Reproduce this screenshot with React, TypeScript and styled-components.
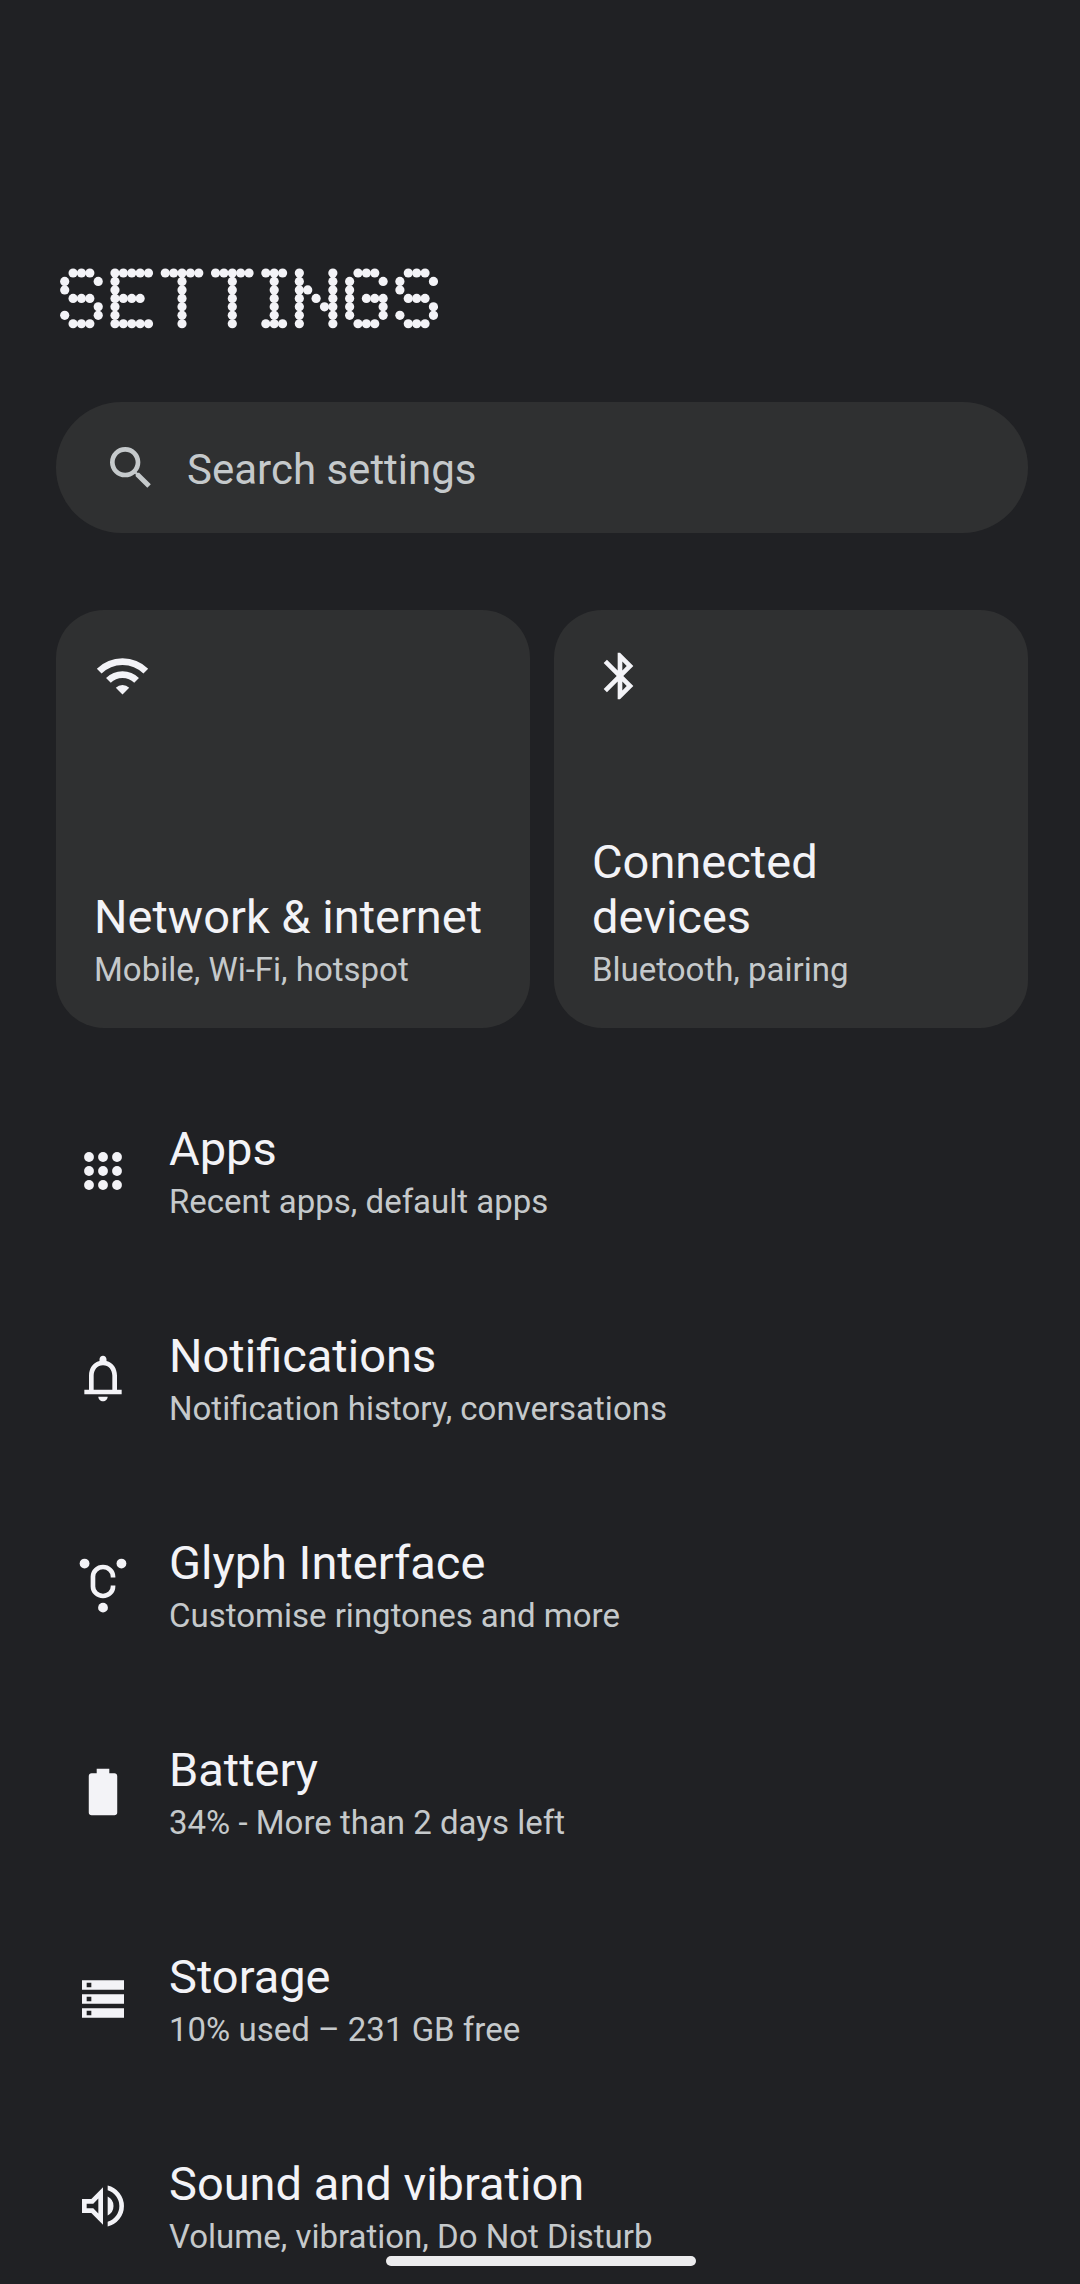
import React from "react";
import styled, { createGlobalStyle } from "styled-components";

const color = {
  page: "#202124",
  surface: "#2f3031",
  text: "#f3f3f7",
  muted: "#c5c9cb",
};

const GlobalStyle = createGlobalStyle`
  *, *::before, *::after { box-sizing: border-box; }
  html { scrollbar-width: none; }
  body {
    margin: 0;
    background: ${color.page};
    color: ${color.text};
    font-family: Roboto, "Noto Sans", sans-serif;
  }
`;

const Screen = styled.main`
  display: flex;
  flex-direction: column;
  padding: 264px 52px 10px 56px;
`;

const Heading = styled.h1`
  margin: 0 0 70px;
  line-height: 0;
`;

const SearchBar = styled.label`
  display: flex;
  align-items: center;
  gap: 28px;
  height: 131px;
  padding: 0 47px;
  border-radius: 66px;
  background: ${color.surface};
  color: ${color.muted};
`;

const SearchInput = styled.input`
  flex: 1;
  min-width: 0;
  padding: 4px 0 0;
  border: 0;
  outline: 0;
  background: none;
  color: ${color.text};
  font: inherit;
  font-size: 42px;
  line-height: 48px;
  &::placeholder { color: ${color.muted}; opacity: 1; }
`;

const Cards = styled.nav`
  display: grid;
  grid-template-columns: 1fr 1fr;
  gap: 24px;
  margin: 77px 0 39px;
`;

const Card = styled.a`
  display: flex;
  flex-direction: column;
  justify-content: space-between;
  min-height: 418px;
  padding: 38px 42px 39px 38px;
  border-radius: 48px;
  background: ${color.surface};
  color: inherit;
  text-decoration: none;
`;

const List = styled.ul`
  margin: 0;
  padding: 0;
  list-style: none;
`;

const Row = styled.a`
  display: flex;
  align-items: center;
  gap: 38px;
  min-height: 207px;
  padding: 0 19px;
  color: inherit;
  text-decoration: none;
`;

const Labels = styled.span`
  display: flex;
  flex-direction: column;
  gap: 6px;
`;

const Title = styled.span`
  font-size: 47px;
  line-height: 55px;
`;

const Summary = styled.span`
  color: ${color.muted};
  font-size: 33px;
  line-height: 39px;
`;

const Icon = styled.svg`
  flex: none;
  display: block;
  width: 56px;
  height: 56px;
  fill: currentColor;
`;

const HomeBar = styled.div`
  position: fixed;
  bottom: 18px;
  left: 50%;
  width: 310px;
  height: 10px;
  margin-left: -154px;
  border-radius: 5px;
  background: #ececee;
`;

const DOT_PITCH = 8.38;
const DOT_ROWS = [
  ".###..#####.#####.#####.###.#...#..###...###.",
  "#...#.#.......#.....#....#..#...#.#...#.#...#",
  "#.....#.......#.....#....#..##..#.#.....#....",
  ".###..####....#.....#....#..#.#.#.#.###..###.",
  "....#.#.......#.....#....#..#..##.#...#.....#",
  "#...#.#.......#.....#....#..#...#.#...#.#...#",
  ".###..#####...#.....#...###.#...#..###...###.",
];

const DotMatrix = ({ label }: { label: string }) => (
  <svg width="382" height="68" role="img" aria-label={label} fill={color.text}>
    {DOT_ROWS.flatMap((row, y) =>
      [...row].map((cell, x) =>
        cell === "#" ? (
          <circle key={`${x}-${y}`} cx={8.7 + x * DOT_PITCH} cy={9 + y * 8.46} r={4.6} />
        ) : null
      )
    )}
  </svg>
);

const icons = {
  search: (
    <path d="M15.5 14h-.79l-.28-.27A6.471 6.471 0 0 0 16 9.5 6.5 6.5 0 1 0 9.5 16c1.61 0 3.09-.59 4.23-1.57l.27.28v.79l5 4.99L20.49 19l-4.99-5zm-6 0C7.01 14 5 11.99 5 9.5S7.01 5 9.5 5 14 7.01 14 9.5 11.99 14 9.5 14z" />
  ),
  wifi: (
    <g transform="scale(.42857)">
      <path d="M5.2 23.2A33 33 0 0 1 51.8 23.2M14.4 32.4A20 20 0 0 1 42.6 32.4" fill="none" stroke="currentColor" strokeWidth="6.7" />
      <path d="M28.5 46.5L21.8 39.8A9.5 9.5 0 0 1 35.2 39.8Z" />
    </g>
  ),
  bluetooth: (
    <path d="M17.71 7.71L12 2h-1v7.59L6.41 5 5 6.41 10.59 12 5 17.59 6.41 19 11 14.41V22h1l5.71-5.71-4.3-4.29 4.3-4.29zM13 5.83l1.88 1.88L13 9.59V5.83zm1.88 10.46L13 18.17v-3.76l1.88 1.88z" />
  ),
  apps: (
    <>
      {[6, 12, 18].flatMap((cy) =>
        [6, 12, 18].map((cx) => <circle key={`${cx}-${cy}`} cx={cx} cy={cy} r="2.1" />)
      )}
    </>
  ),
  bell: (
    <path d="M18 17v-6c0-3.07-1.63-5.64-4.5-6.32V4c0-.83-.67-1.5-1.5-1.5s-1.5.67-1.5 1.5v.68C7.64 5.36 6 7.92 6 11v6H4v2h16v-2h-2zm-2 0H8v-6c0-2.48 1.51-4.5 4-4.5s4 2.02 4 4.5v6zm-4 5c1.1 0 2-.9 2-2h-4c0 1.1.9 2 2 2z" />
  ),
  glyph: (
    <>
      <circle cx="4.1" cy="2.8" r="2.1" />
      <circle cx="19.9" cy="2.8" r="2.1" />
      <circle cx="12" cy="21.7" r="2.1" />
      <path d="M16.3 8.8V8.4A4.3 4.1 0 0 0 7.7 8.4V12.6A4.3 4.1 0 0 0 16.3 12.6V12.2" fill="none" stroke="currentColor" strokeWidth="2" />
    </>
  ),
  battery: (
    <path d="M16.9 4H14.7V2H9.3v2H7.1C6.4 4 5.9 4.5 5.9 5.2v15.6c0 .7.5 1.2 1.2 1.2h9.8c.7 0 1.2-.5 1.2-1.2V5.2C18.1 4.5 17.6 4 16.9 4z" />
  ),
  storage: (
    <path d="M3 20h18v-4H3v4zm2-3h2v2H5v-2zM3 4v4h18V4H3zm4 3H5V5h2v2zm-4 7h18v-4H3v4zm2-3h2v2H5v-2z" />
  ),
  sound: (
    <path d="M3 9v6h4l5 5V4L7 9H3zm7-.17v6.34L7.83 13H5v-2h2.83L10 8.83zM16.5 12A4.5 4.5 0 0 0 14 7.97v8.05A4.47 4.47 0 0 0 16.5 12zM14 3.23v2.06a7 7 0 0 1 0 13.42v2.06a9 9 0 0 0 0-17.54z" />
  ),
};

type IconName = keyof typeof icons;

const EntryIcon = ({ name }: { name: IconName }) => (
  <Icon viewBox="0 0 24 24" overflow="visible" aria-hidden="true">
    {icons[name]}
  </Icon>
);

type Entry = { icon: IconName; title: string; summary: string };

const cards: Entry[] = [
  { icon: "wifi", title: "Network & internet", summary: "Mobile, Wi-Fi, hotspot" },
  { icon: "bluetooth", title: "Connected devices", summary: "Bluetooth, pairing" },
];

const rows: Entry[] = [
  { icon: "apps", title: "Apps", summary: "Recent apps, default apps" },
  { icon: "bell", title: "Notifications", summary: "Notification history, conversations" },
  { icon: "glyph", title: "Glyph Interface", summary: "Customise ringtones and more" },
  { icon: "battery", title: "Battery", summary: "34% - More than 2 days left" },
  { icon: "storage", title: "Storage", summary: "10% used – 231 GB free" },
  { icon: "sound", title: "Sound and vibration", summary: "Volume, vibration, Do Not Disturb" },
];

const EntryLabels = ({ title, summary }: Entry) => (
  <Labels>
    <Title>{title}</Title>
    <Summary>{summary}</Summary>
  </Labels>
);

export default function App() {
  return (
    <>
      <GlobalStyle />
      <Screen>
        <Heading>
          <DotMatrix label="SETTINGS" />
        </Heading>
        <SearchBar htmlFor="search">
          <EntryIcon name="search" />
          <SearchInput id="search" type="text" placeholder="Search settings" aria-label="Search settings" />
        </SearchBar>
        <Cards>
          {cards.map((entry) => (
            <Card key={entry.icon} href={`#${entry.icon}`}>
              <EntryIcon name={entry.icon} />
              <EntryLabels {...entry} />
            </Card>
          ))}
        </Cards>
        <List>
          {rows.map((entry) => (
            <li key={entry.icon}>
              <Row href={`#${entry.icon}`}>
                <EntryIcon name={entry.icon} />
                <EntryLabels {...entry} />
              </Row>
            </li>
          ))}
        </List>
      </Screen>
      <HomeBar />
    </>
  );
}
